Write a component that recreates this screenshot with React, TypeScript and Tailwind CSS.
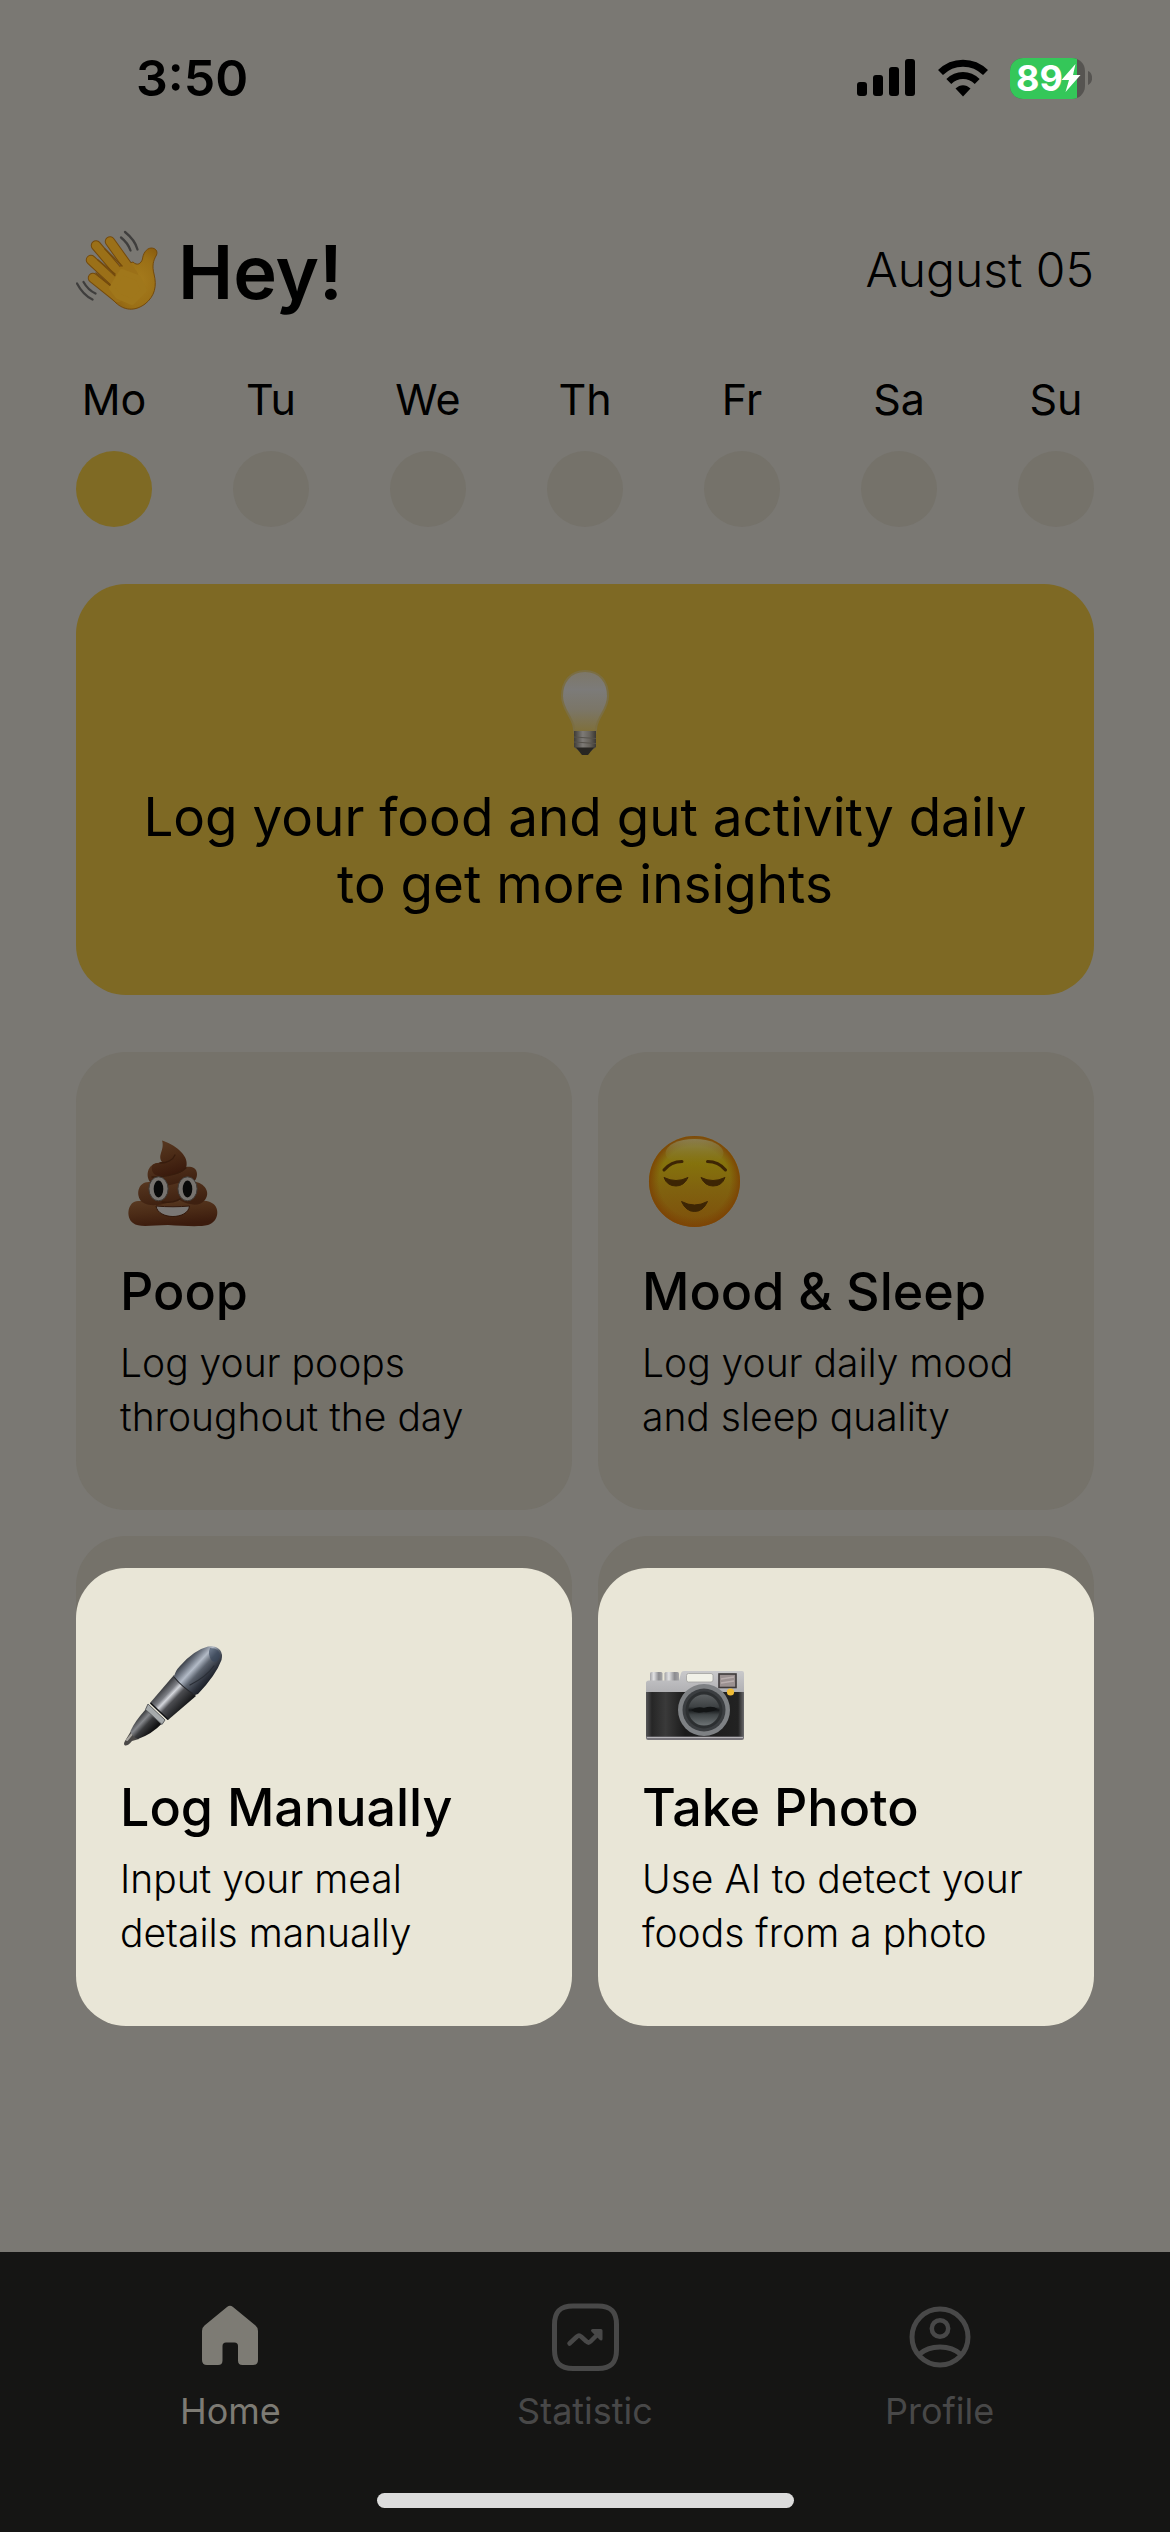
import type { ReactNode } from 'react';

function WaveIcon() {
  return (
    <svg viewBox="0 0 84 84" className="size-[84px] shrink-0" fill="none" aria-hidden="true">
      <defs>
        <radialGradient id="hand" cx="0.62" cy="0.55" r="0.6">
          <stop offset="0" stopColor="#a67c1d" />
          <stop offset="0.7" stopColor="#9a6f16" />
          <stop offset="1" stopColor="#8c5f10" />
        </radialGradient>
      </defs>
      <g stroke="#744a0c" strokeLinecap="round" strokeWidth="10.5">
        <path d="M34 13.500L58 47" />
        <path d="M20 17.500L50 53" />
        <path d="M15 32L45 60" />
        <path d="M17 50L42 70" />
      </g>
      <path
        d="M57 34C61 38 65 36 66.500 31C67 26 70 20.500 75 20C79.500 20 82 23 80.500 27C77 33 76 38 78 46C81 58 79 68 69 76C58 84 48 82 40 75L30 65L44 38Z"
        fill="url(#hand)"
        stroke="#744a0c"
        strokeWidth="1"
      />
      <g stroke="#9b7018" strokeLinecap="round" strokeWidth="8.500">
        <path d="M34 13.500L58 47" />
        <path d="M20 17.500L50 53" />
        <path d="M15 32L45 60" />
        <path d="M17 50L42 70" />
      </g>
      <path d="M46 44L62 50L68 62L56 74L42 68L36 60Z" fill="#a0771b" stroke="#a0771b" strokeWidth="6" strokeLinejoin="round" />
      <g stroke="#744a0c" strokeWidth="1.500" strokeLinecap="round">
        <path d="M29 21L46 38" />
        <path d="M22 32L39 46" />
        <path d="M20 45L34 57" />
      </g>
      <g stroke="#3f3e3d" strokeWidth="2.300" strokeLinecap="round">
        <path d="M49 4Q59 12 61.500 21.500" />
        <path d="M45 9.500Q52 15 54.500 22.500" />
        <path d="M1 55.500Q7 67 16.500 71.500" />
        <path d="M7.500 54Q12 62 19.500 65.500" />
      </g>
    </svg>
  );
}

function BulbIcon() {
  return (
    <svg viewBox="0 0 60 92" className="h-[92px] w-[60px]" fill="none" aria-hidden="true">
      <defs>
        <linearGradient id="glass" x1="0" y1="0" x2="0" y2="1">
          <stop offset="0" stopColor="#7d7768" />
          <stop offset="0.3" stopColor="#7c7b79" />
          <stop offset="0.62" stopColor="#7b7668" />
          <stop offset="1" stopColor="#7f6f38" />
        </linearGradient>
        <linearGradient id="screw" x1="0" y1="0" x2="1" y2="0">
          <stop offset="0" stopColor="#3f3c37" />
          <stop offset="0.4" stopColor="#7d7a76" />
          <stop offset="0.7" stopColor="#67635c" />
          <stop offset="1" stopColor="#3b3833" />
        </linearGradient>
      </defs>
      <path
        d="M30 3C15 3 7 14 7 28C7 41 16 47 18.500 58L19.500 65H40.500L41.500 58C44 47 53 41 53 28C53 14 45 3 30 3Z"
        fill="url(#glass)"
        stroke="#7b6e42"
        strokeWidth="2"
      />
      <path d="M19 63H41V79L36 83H24L19 79Z" fill="url(#screw)" />
      <path d="M19 69L41 70.500M19 74L41 75.500" stroke="#56524b" strokeWidth="1" />
      <path d="M21 79.500H39L33 87H27Z" fill="#282622" />
    </svg>
  );
}

function PoopIcon() {
  return (
    <svg viewBox="0 0 104 104" className="size-[104px]" fill="none" aria-hidden="true">
      <defs>
        <linearGradient id="poop" x1="0" y1="0" x2="0.3" y2="1">
          <stop offset="0" stopColor="#593a22" />
          <stop offset="0.5" stopColor="#4c2c17" />
          <stop offset="1" stopColor="#3b1b0d" />
        </linearGradient>
        <linearGradient id="coil" x1="0" y1="0" x2="0.4" y2="1">
          <stop offset="0" stopColor="#573720" />
          <stop offset="1" stopColor="#3e2010" />
        </linearGradient>
      </defs>
      <path d="M15 73C4 72 1 89 9 95C15 100 28 97 44 97C60 98 76 99 84 97C95 94 97 78 86 74C80 71 25 73 15 73Z" fill="url(#poop)" />
      <path d="M26 54C14 53 11 67 18 74C28 81 43 75 55 72C66 78 76 78 80 73C87 66 82 56 72 54Z" fill="url(#coil)" />
      <path d="M34 35C23 36 21 49 27 55C38 61 49 56 57 54C67 59 73 53 73 46C73 39 66 38 61 39Z" fill="url(#coil)" />
      <path d="M38 12.500C50 16 65 27 62.500 38C60 47 47 47 36 48C29 48 27 42 28 38C29 35 34 35 38 34C33 27 41 22 38 12.500Z" fill="url(#poop)" />
      <path d="M36 35C43 35 49 32 51 27M28 49C42 49 55 46 62 40M38 74C50 76 58 71 63 65" stroke="#371c0d" strokeWidth="1.300" strokeLinecap="round" />
      <ellipse cx="34.500" cy="60.800" rx="9.600" ry="12" fill="#77736f" stroke="#403c38" strokeWidth="1" />
      <ellipse cx="63.500" cy="60.800" rx="9.600" ry="12" fill="#77736f" stroke="#403c38" strokeWidth="1" />
      <ellipse cx="34.500" cy="61" rx="4.800" ry="8.500" fill="#090909" />
      <ellipse cx="63.500" cy="61" rx="4.800" ry="8.500" fill="#090909" />
      <path d="M32 78C43 79 55 79 65.500 78C64 92 34 92 32 78Z" fill="#7a7775" stroke="#31170a" strokeWidth="1" />
    </svg>
  );
}

function RelievedIcon() {
  return (
    <svg viewBox="0 0 104 104" className="size-[104px]" fill="none" aria-hidden="true">
      <defs>
        <linearGradient id="face" x1="0" y1="0" x2="0" y2="1">
          <stop offset="0" stopColor="#857528" />
          <stop offset="0.3" stopColor="#85720c" />
          <stop offset="0.6" stopColor="#80610f" />
          <stop offset="1" stopColor="#7e4f0b" />
        </linearGradient>
        <radialGradient id="rim" cx="0.5" cy="0.5" r="0.5">
          <stop offset="0.78" stopColor="#7c4504" stopOpacity="0" />
          <stop offset="1" stopColor="#7c4204" stopOpacity="0.9" />
        </radialGradient>
        <linearGradient id="shine" x1="0" y1="0" x2="0" y2="1">
          <stop offset="0" stopColor="#8c8660" stopOpacity="0.8" />
          <stop offset="1" stopColor="#85720c" stopOpacity="0" />
        </linearGradient>
      </defs>
      <circle cx="48.500" cy="53.500" r="45.500" fill="url(#face)" />
      <circle cx="48.500" cy="53.500" r="45.500" fill="url(#rim)" />
      <ellipse cx="48.500" cy="25" rx="29" ry="14" fill="url(#shine)" />
      <g stroke="#3d2504" strokeWidth="3" strokeLinecap="round">
        <path d="M18 42Q25 33.500 36 33.500" />
        <path d="M79.500 42Q72.500 33.500 61.500 33.500" />
      </g>
      <g fill="#3d2504" stroke="#3d2504" strokeWidth="1" strokeLinejoin="round">
        <path d="M18 49.500Q30 55.500 42 49.500Q38 58 30 58Q21 58 18 49.500Z" />
        <path d="M55 49.500Q67 55.500 79 49.500Q76 58 67 58Q59 58 55 49.500Z" />
        <path d="M35.500 73.500Q48.500 80.500 61.500 73.500Q57 83.500 48.500 83.500Q40 83.500 35.500 73.500Z" />
      </g>
    </svg>
  );
}

function PenIcon() {
  return (
    <svg viewBox="0 0 104 104" className="size-[104px]" fill="none" aria-hidden="true">
      <defs>
        <linearGradient id="cap" gradientUnits="userSpaceOnUse" x1="58" y1="18" x2="84" y2="42">
          <stop offset="0" stopColor="#30343b" />
          <stop offset="0.18" stopColor="#6d7480" />
          <stop offset="0.36" stopColor="#b3bbc7" />
          <stop offset="0.55" stopColor="#5a616c" />
          <stop offset="0.8" stopColor="#2d323c" />
          <stop offset="1" stopColor="#15181f" />
        </linearGradient>
        <linearGradient id="barrel" gradientUnits="userSpaceOnUse" x1="37" y1="43" x2="59" y2="64">
          <stop offset="0" stopColor="#2b2c2f" />
          <stop offset="0.3" stopColor="#7d7f85" />
          <stop offset="0.42" stopColor="#d5d7dc" />
          <stop offset="0.6" stopColor="#4c4d51" />
          <stop offset="1" stopColor="#17181a" />
        </linearGradient>
        <linearGradient id="grip" gradientUnits="userSpaceOnUse" x1="12" y1="74" x2="27" y2="88">
          <stop offset="0" stopColor="#2b2c2e" />
          <stop offset="0.35" stopColor="#85878b" />
          <stop offset="0.6" stopColor="#3a3b3d" />
          <stop offset="1" stopColor="#121213" />
        </linearGradient>
      </defs>
      <path d="M7 87L15 95L8 97Q4 102 1 101.500Q-1 100 1 97Z" fill="#4b4947" />
      <path d="M3 96L8 90" stroke="#a7a49f" strokeWidth="2" strokeLinecap="round" />
      <path d="M22 65L38 79.500Q28 90 14 95Q8 93 6.500 87Q11 77 22 65Z" fill="url(#grip)" />
      <path d="M24 60L41 76L38 80.500L21.500 65.500Z" fill="#a6aaab" stroke="#5c5f61" strokeWidth="1" />
      <path d="M50 31L72 52L44 76L26 59Z" fill="url(#barrel)" />
      <path d="M26.500 59L44 75.500" stroke="#121315" strokeWidth="1.500" />
      <path d="M50 33Q51 27 56 22Q70 6 84 2.500Q92 1 96 6Q99 10 97.500 16Q92 31 74 50L71 51Q58 43 50 33Z" fill="url(#cap)" />
      <path d="M50 33Q58 43 71 51" stroke="#25272b" strokeWidth="1.200" />
      <path d="M66 41Q82 33 90 22" stroke="#2a2e36" strokeWidth="1.200" strokeLinecap="round" />
      <path d="M86 4Q96 4 96 12Q94 20 88 17Q83 10 86 4Z" fill="#35445a" fillOpacity="0.6" />
    </svg>
  );
}

function CameraIcon() {
  return (
    <svg viewBox="0 0 104 104" className="size-[104px]" fill="none" aria-hidden="true">
      <defs>
        <linearGradient id="plate" x1="0" y1="0" x2="0" y2="1">
          <stop offset="0" stopColor="#c9c9cb" />
          <stop offset="1" stopColor="#aeaeb1" />
        </linearGradient>
        <linearGradient id="knob" x1="0" y1="0" x2="1" y2="0">
          <stop offset="0" stopColor="#a3a3a6" />
          <stop offset="0.3" stopColor="#e2e2e3" />
          <stop offset="0.7" stopColor="#8b8b8e" />
          <stop offset="1" stopColor="#a6a6a8" />
        </linearGradient>
        <linearGradient id="leather" x1="0" y1="0" x2="1" y2="0">
          <stop offset="0" stopColor="#555557" />
          <stop offset="0.06" stopColor="#262626" />
          <stop offset="0.2" stopColor="#3a3a3a" />
          <stop offset="0.4" stopColor="#1a1a1a" />
          <stop offset="0.94" stopColor="#222222" />
          <stop offset="1" stopColor="#6a6a6c" />
        </linearGradient>
        <linearGradient id="lens" x1="0" y1="0" x2="0" y2="1">
          <stop offset="0" stopColor="#5d6163" />
          <stop offset="0.4" stopColor="#3d4143" />
          <stop offset="0.5" stopColor="#15181a" />
          <stop offset="0.65" stopColor="#3f4446" />
          <stop offset="1" stopColor="#6d7375" />
        </linearGradient>
      </defs>
      <rect x="4" y="28" width="12.500" height="11" rx="1.500" fill="url(#knob)" />
      <rect x="18.500" y="28" width="14.500" height="11" rx="1.500" fill="url(#knob)" />
      <path d="M0 39Q0 36.500 3 36.500H33L35 29Q35.500 27 38 27H96Q98 27 98 29V50H0Z" fill="url(#plate)" />
      <rect x="0" y="48" width="98" height="45" fill="url(#leather)" />
      <path d="M0 92.500H98V94Q98 96 96 96H2Q0 96 0 94Z" fill="#77757a" />
      <path d="M1 93.500H97" stroke="#b5b3b7" strokeWidth="1" />
      <rect x="40.500" y="29.500" width="26.500" height="8.500" rx="2" fill="#f1f1e8" stroke="#a1a19e" strokeWidth="0.800" />
      <rect x="73" y="30" width="17" height="13.500" fill="#9b9191" stroke="#3e3a3b" strokeWidth="1.600" />
      <path d="M75 35L88 33M75 39L88 37" stroke="#b9aeae" strokeWidth="1.300" />
      <circle cx="58" cy="66" r="26" fill="#7e8184" />
      <circle cx="58" cy="66" r="21.500" fill="#3b3e41" />
      <circle cx="58" cy="66" r="18.500" fill="#2c2f31" />
      <circle cx="58" cy="66" r="15.500" fill="url(#lens)" />
      <path d="M45 66Q51 62 58 64Q66 61 72 65Q65 69 58 68Q50 70 45 66Z" fill="#121415" />
      <circle cx="84.500" cy="48" r="3.600" fill="#f0bc36" />
    </svg>
  );
}

type Activity = { icon: ReactNode; title: string; lines: [string, string] };

const days = ['Mo', 'Tu', 'We', 'Th', 'Fr', 'Sa', 'Su'];

const activities: Activity[] = [
  { icon: <PoopIcon />, title: 'Poop', lines: ['Log your poops', 'throughout the day'] },
  { icon: <RelievedIcon />, title: 'Mood & Sleep', lines: ['Log your daily mood', 'and sleep quality'] },
];

const foodOptions: Activity[] = [
  { icon: <PenIcon />, title: 'Log Manually', lines: ['Input your meal', 'details manually'] },
  { icon: <CameraIcon />, title: 'Take Photo', lines: ['Use AI to detect your', 'foods from a photo'] },
];

function CardBody({ icon, title, lines }: Activity) {
  return (
    <>
      <span className="block pl-1">{icon}</span>
      <span className="mt-[30px] block text-[52px] leading-[60px] font-medium whitespace-nowrap">{title}</span>
      <span className="mt-[14px] block text-[39px] leading-[54px] font-light whitespace-nowrap">
        {lines[0]}
        <br />
        {lines[1]}
      </span>
    </>
  );
}

function StatusBar() {
  return (
    <div className="flex h-[156px] items-center justify-between pr-[78px] pl-[136px]">
      <span className="text-[50px] leading-none font-semibold">3:50</span>
      <div className="flex items-center">
        <svg viewBox="0 0 58 38" className="h-[38px] w-[58px]" aria-label="Signal">
          <rect x="0" y="23" width="10" height="14" rx="3" />
          <rect x="16" y="16" width="10" height="21" rx="3" />
          <rect x="32" y="8" width="10" height="29" rx="3" />
          <rect x="48" y="0" width="10" height="37" rx="3" />
        </svg>
        <svg viewBox="0 0 50 38" className="ml-[23px] h-[38px] w-[50px]" fill="none" aria-label="Wi-Fi">
          <path d="M2.500 13.500C15 1 35 1 47.500 13.500" stroke="#000" strokeWidth="7" />
          <path d="M10.800 22.500C19 14.500 31 14.500 39.200 22.500" stroke="#000" strokeWidth="7" />
          <path d="M17.500 29.500C22 25 28 25 32.500 29.500L25 37.500Z" fill="#000" />
        </svg>
        <div className="relative ml-[22px] h-[41px] w-[75px] overflow-hidden rounded-[13px] bg-[#565451]">
          <div className="h-full w-[67px] bg-[#34c759]" />
          <div className="absolute inset-0 flex items-center pl-[6px] text-white">
            <span className="text-[36px] leading-none font-bold">89</span>
            <svg viewBox="0 0 20 28" className="-ml-0.5 h-[28px] w-[20px] shrink-0" fill="currentColor" aria-label="Charging">
              <path d="M14.500 0L0.500 16H8L4.500 28L19.500 11H12Z" />
            </svg>
          </div>
        </div>
        <svg viewBox="0 0 4 14" className="ml-[3px] h-[14px] w-[4px]" aria-hidden="true">
          <path d="M0 0C5.500 2 5.500 12 0 14Z" fill="#565451" />
        </svg>
      </div>
    </div>
  );
}

function HomeIcon() {
  return (
    <svg viewBox="0 0 72 72" className="size-[72px]" fill="currentColor" aria-hidden="true">
      <path d="M33 7Q36 4.500 39 7L61.500 25.500Q64 27.500 64 31V60Q64 65 59 65H48.500Q44 65 44 60.500V46Q44 42.500 40.500 42.500H32Q28.500 42.500 28.500 46V60.500Q28.500 65 24 65H13Q8 65 8 60V31Q8 27.500 10.500 25.500Z" />
    </svg>
  );
}

function StatisticIcon() {
  return (
    <svg viewBox="0 0 72 72" className="size-[72px]" fill="none" stroke="currentColor" strokeWidth="5" aria-hidden="true">
      <path d="M24 6H49C62 6 67.500 11.500 67.500 24.500V50C67.500 63 62 68.500 49 68.500H24C11 68.500 5.500 63 5.500 50V24.500C5.500 11.500 11 6 24 6Z" />
      <path d="M20.500 43.500L28 36.500Q30 34.500 32 36.500L37.500 41.500Q39.500 43.500 41.500 41.500L50 33" strokeWidth="4.500" strokeLinecap="round" strokeLinejoin="round" />
      <path d="M43.500 30.500H52V39Z" fill="currentColor" strokeWidth="3" strokeLinejoin="round" />
    </svg>
  );
}

function ProfileIcon() {
  return (
    <svg viewBox="0 0 72 72" className="size-[72px]" fill="none" stroke="currentColor" strokeWidth="5" aria-hidden="true">
      <circle cx="36" cy="37" r="28" />
      <circle cx="36" cy="28.500" r="8.200" strokeWidth="4.500" />
      <path d="M15 54.500C26 44.500 46 44.500 57 54.500" />
    </svg>
  );
}

const tabs = [
  { label: 'Home', icon: <HomeIcon />, active: true },
  { label: 'Statistic', icon: <StatisticIcon />, active: false },
  { label: 'Profile', icon: <ProfileIcon />, active: false },
];

export default function App() {
  return (
    <div className="flex min-h-screen flex-col bg-[#7a7873] font-['Inter',sans-serif] text-black">
      <StatusBar />

      <main className="flex-1 px-[76px] pt-[72px] pb-16">
        <header className="flex items-center justify-between">
          <div className="flex items-center gap-[18px]">
            <WaveIcon />
            <h1 className="pt-1 text-[74px] leading-[80px] font-semibold">Hey!</h1>
          </div>
          <time className="text-[48px] leading-[60px] font-light">August 05</time>
        </header>

        <ul className="mt-[59px] flex justify-between">
          {days.map((day, i) => (
            <li key={day} className="flex w-[76px] flex-col items-center gap-6">
              <span className="text-[43px] leading-[56px]">{day}</span>
              <span className={i === 0 ? 'size-[76px] rounded-full bg-[#7f6a24]' : 'size-[76px] rounded-full bg-[#75726a]'} />
            </li>
          ))}
        </ul>

        <section className="mt-[57px] flex flex-col items-center rounded-[50px] bg-[#7e6924] px-8 pt-[84px] pb-[77px]">
          <BulbIcon />
          <p className="mt-6 text-center text-[53px] leading-[67px]">
            Log your food and gut activity daily
            <br />
            to get more insights
          </p>
        </section>

        <div className="mt-[57px] grid grid-cols-2 gap-[26px]">
          {activities.map((item) => (
            <button key={item.title} type="button" className="rounded-[50px] bg-[#75726a] px-11 pt-[76px] pb-[66px] text-left">
              <CardBody {...item} />
            </button>
          ))}
          {foodOptions.map((item) => (
            <div key={item.title} className="rounded-[50px] bg-[#75726a] pt-8">
              <button type="button" className="w-full rounded-[50px] bg-[#e9e6d7] px-11 pt-[76px] pb-[66px] text-left">
                <CardBody {...item} />
              </button>
            </div>
          ))}
        </div>
      </main>

      <nav className="bg-[#151514] pt-12 pb-6">
        <div className="grid grid-cols-3 px-[53px]">
          {tabs.map((tab) => (
            <button
              key={tab.label}
              type="button"
              className={
                tab.active
                  ? 'flex flex-col items-center gap-[15px] text-[#7d7b74]'
                  : 'flex flex-col items-center gap-[15px] text-[#484848]'
              }
            >
              {tab.icon}
              <span className="text-[36px] leading-[48px]">{tab.label}</span>
            </button>
          ))}
        </div>
        <div className="mx-auto mt-[58px] h-[15px] w-[417px] rounded-full bg-[#dcdcdc]" />
      </nav>
    </div>
  );
}
